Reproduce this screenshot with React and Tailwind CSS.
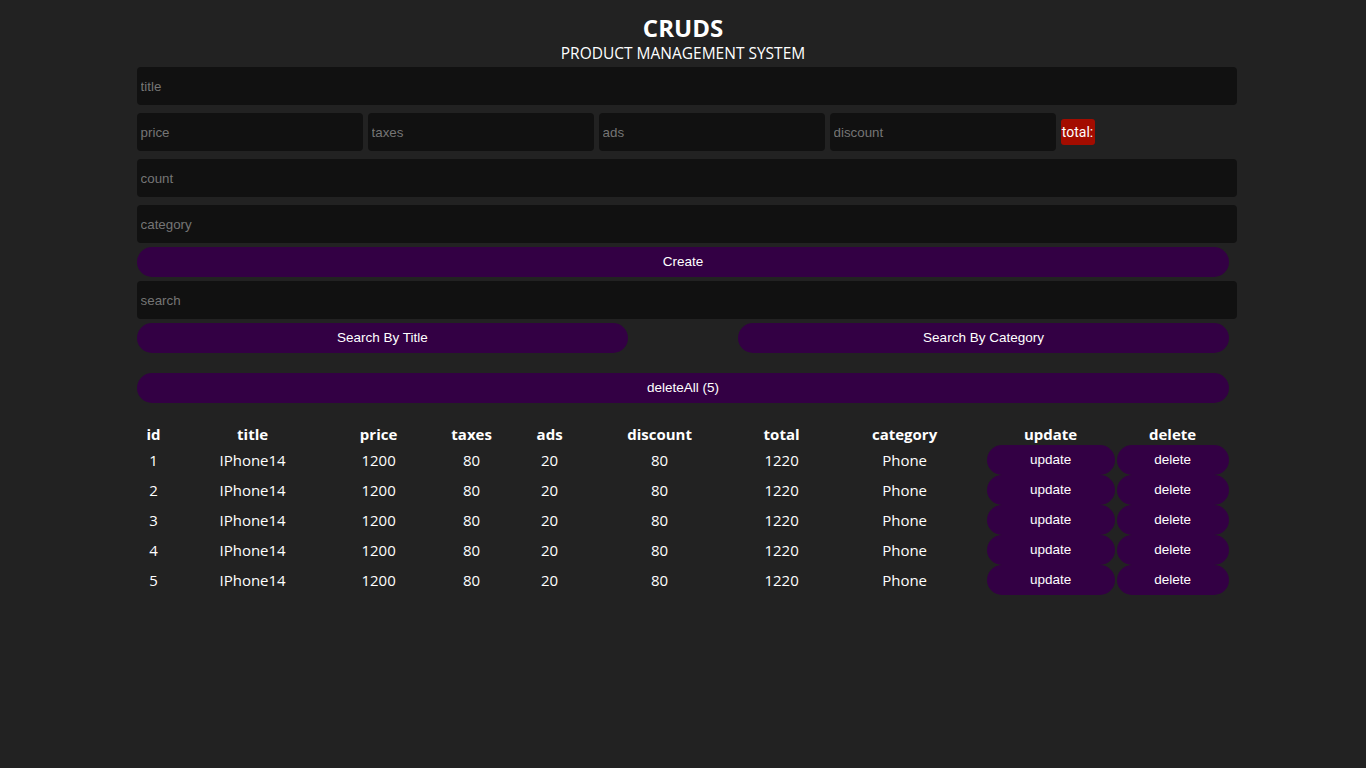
import React from "react";

const rows = [1, 2, 3, 4, 5].map((id) => ({
  id,
  title: "IPhone14",
  price: 1200,
  taxes: 80,
  ads: 20,
  discount: 80,
  total: 1220,
  category: "Phone",
}));

const inputCls =
  "block h-[38px] bg-[#111111] rounded-[4px] px-[4px] text-[13.33px] text-[#cccccc] placeholder:text-[#757575] outline-none border-0 [font-family:'Liberation_Sans',Arial,sans-serif]";

const btnCls =
  "h-[30px] bg-[#330044] rounded-full text-white text-[13.5px] [font-family:'Liberation_Sans',Arial,sans-serif]";

const cols =
  "grid grid-cols-[34px_164px_88px_98px_58px_162px_82px_164px_128px_114px]";

export default function App() {
  return (
    <div className="min-h-screen bg-[#222222] text-white">
      <div className="w-[80%] mx-auto">
        <div className="text-center pt-[14px] mb-[3px] [font-family:'Open_Sans','Noto_Sans',sans-serif]">
          <h2 className="text-[24px] leading-[28px] font-bold">CRUDS</h2>
          <p className="text-[15.5px] leading-[22px]">PRODUCT MANAGEMENT SYSTEM</p>
        </div>

        <input placeholder="title" className={`${inputCls} w-[calc(100%+8px)]`} />

        <div className="flex items-center gap-[4.4px] mt-[8px]">
          <input placeholder="price" className={`${inputCls} w-[226.6px]`} />
          <input placeholder="taxes" className={`${inputCls} w-[226.6px]`} />
          <input placeholder="ads" className={`${inputCls} w-[226.6px]`} />
          <input placeholder="discount" className={`${inputCls} w-[226.6px]`} />
          <small className="bg-[#a30c00] rounded-[3px] h-[26px] w-[34px] flex items-center justify-center text-[14px] text-white [font-family:'Roboto','Liberation_Sans',sans-serif]">
            total:
          </small>
        </div>

        <input placeholder="count" className={`${inputCls} w-[calc(100%+8px)] mt-[8px]`} />
        <input placeholder="category" className={`${inputCls} w-[calc(100%+8px)] mt-[8px]`} />

        <button className={`${btnCls} w-full mt-[4px] block`}>Create</button>

        <input placeholder="search" className={`${inputCls} w-[calc(100%+8px)] mt-[4px]`} />

        <div className="flex justify-between mt-[4px]">
          <button className={`${btnCls} w-[45%]`}>Search By Title</button>
          <button className={`${btnCls} w-[45%]`}>Search By Category</button>
        </div>

        <button className={`${btnCls} w-full mt-[20px] block`}>deleteAll (5)</button>

        <div className="mt-[20px] text-[15px] text-center [font-family:'Open_Sans','Noto_Sans',sans-serif]">
          <div className={`${cols} h-[22px] items-center font-bold`}>
            <div>id</div>
            <div>title</div>
            <div>price</div>
            <div>taxes</div>
            <div>ads</div>
            <div>discount</div>
            <div>total</div>
            <div>category</div>
            <div>update</div>
            <div className="pl-[2px]">delete</div>
          </div>
          {rows.map((r) => (
            <div key={r.id} className={`${cols} h-[30px] items-center`}>
              <div>{r.id}</div>
              <div>{r.title}</div>
              <div>{r.price}</div>
              <div>{r.taxes}</div>
              <div>{r.ads}</div>
              <div>{r.discount}</div>
              <div>{r.total}</div>
              <div>{r.category}</div>
              <div className="self-start">
                <button className={`${btnCls} w-full h-[29px] block`}>update</button>
              </div>
              <div className="self-start pl-[2px]">
                <button className={`${btnCls} w-full h-[29px] block`}>delete</button>
              </div>
            </div>
          ))}
        </div>
      </div>
    </div>
  );
}
